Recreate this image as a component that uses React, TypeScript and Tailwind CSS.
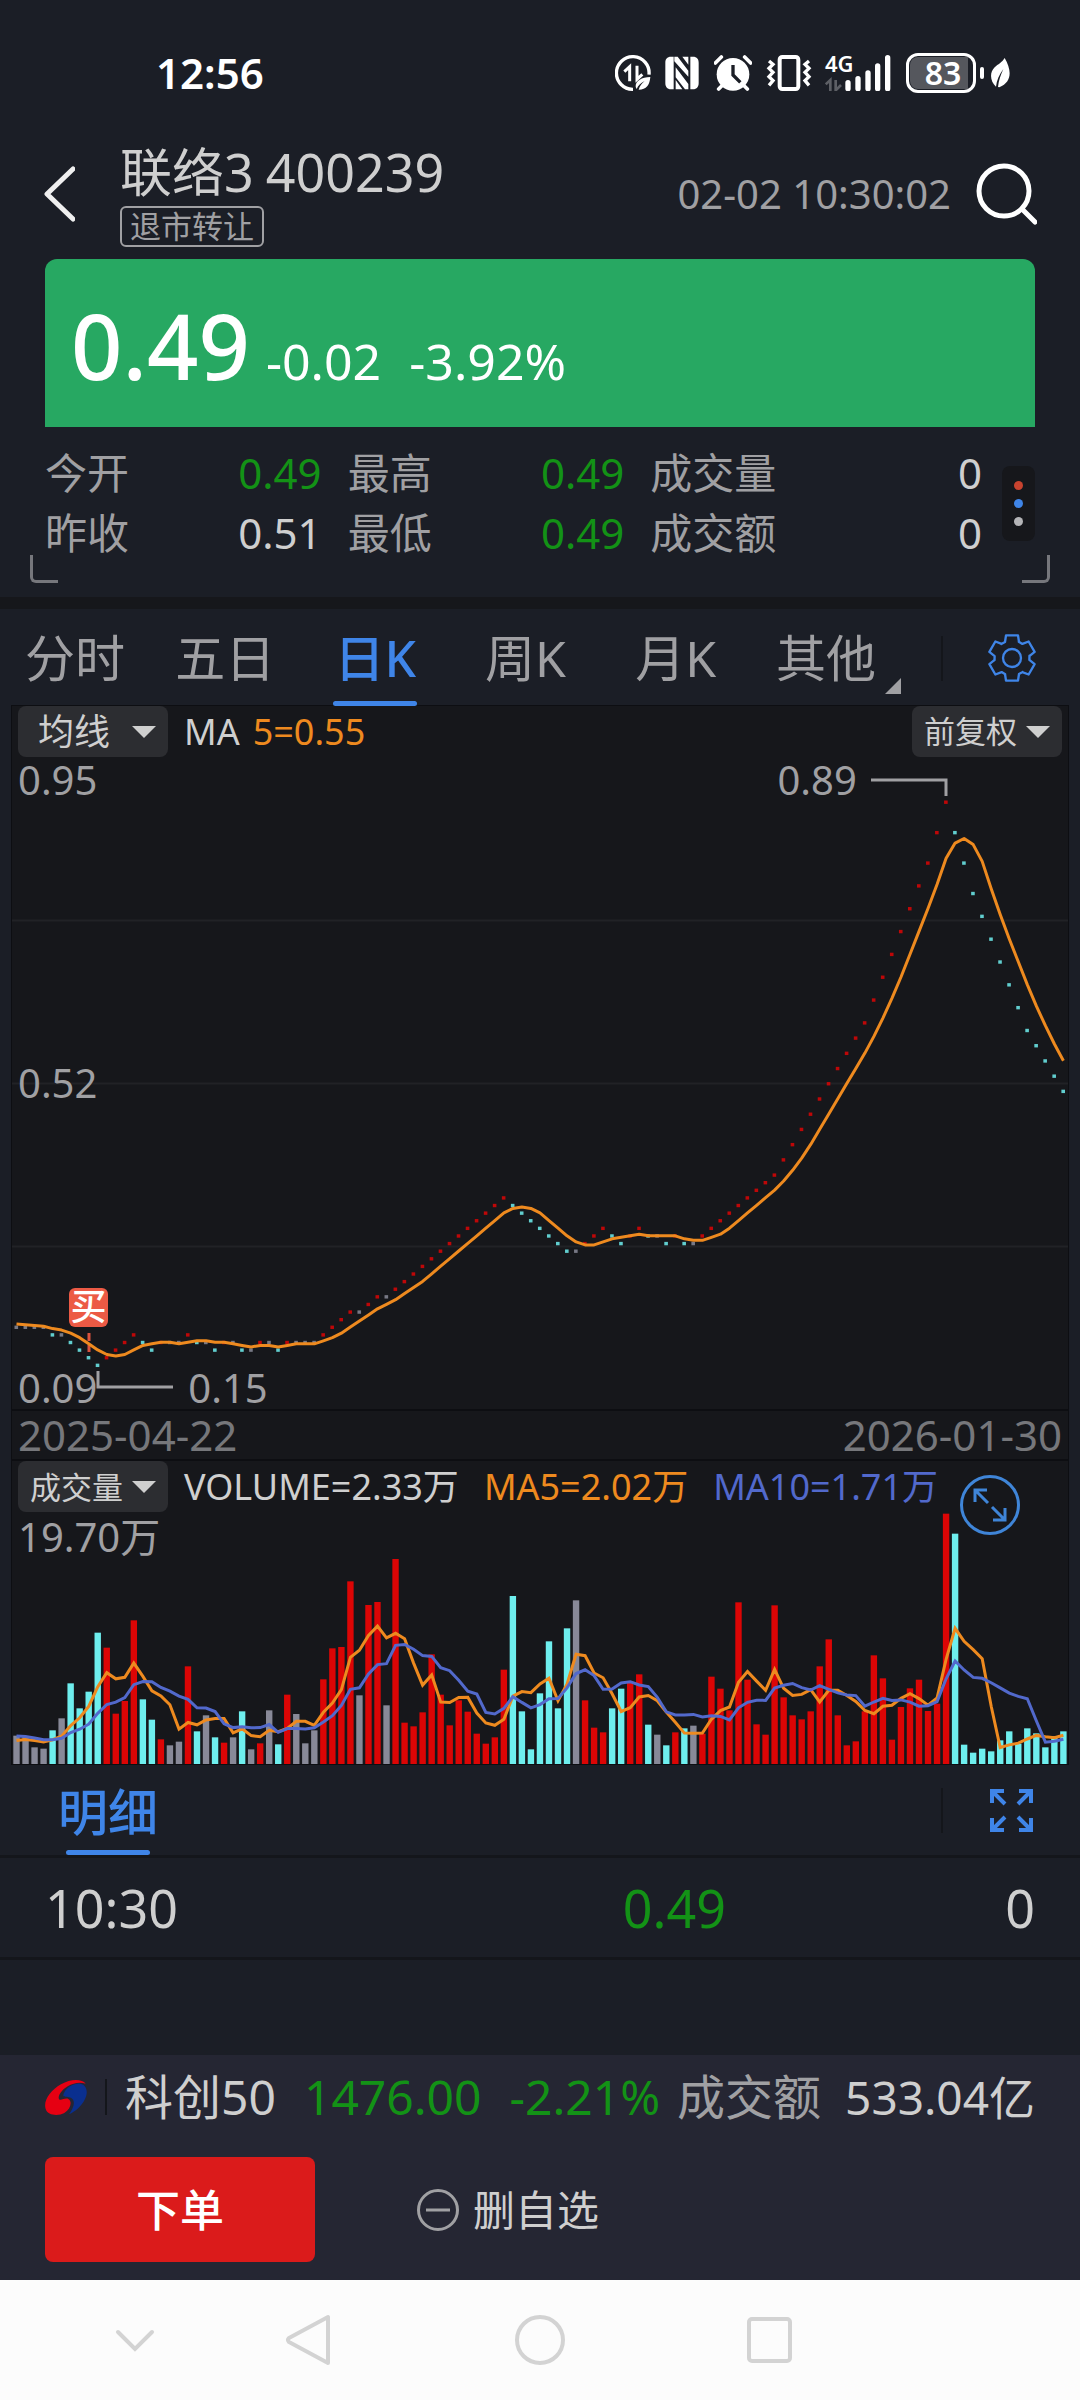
import clsx from "clsx";

const UP = "#dc0505";
const DOWN = "#6eeeee";
const FLAT = "#888998";
const STEP = 9.025;

// closing prices in cents, one per trading day
const closes = [
	20, 20, 20, 20, 19, 19, 18, 17, 16, 15, 16, 17, 18, 19, 18, 17, 18, 18, 18, 19, 18, 18, 17, 18, 18, 17, 17, 18, 18, 17,
	18, 18, 18, 18, 19, 20, 21, 22, 22, 23, 24, 24, 25, 26, 27, 28, 29, 30, 31, 32, 33, 34, 35, 36, 37, 36, 35, 34, 33, 32,
	31, 30, 30, 31, 32, 33, 32, 31, 32, 33, 32, 32, 31, 32, 31, 31, 32, 33, 34, 35, 36, 37, 38, 39, 40, 42, 44, 46, 48, 50,
	52, 54, 56, 58, 60, 63, 66, 69, 72, 75, 78, 81, 85, 89, 85, 81, 77, 74, 71, 68, 65, 62, 59, 57, 55, 53, 51,
];

const volumes = [
	85, 83, 50, 46, 101, 137, 242, 167, 217, 394, 349, 151, 189, 431, 194, 133, 74, 56, 67, 293, 98, 146, 80, 64, 80, 158,
	44, 62, 161, 59, 208, 150, 62, 101, 254, 347, 351, 548, 206, 477, 486, 176, 615, 124, 113, 155, 329, 208, 116, 191,
	157, 91, 61, 80, 283, 504, 158, 44, 212, 368, 167, 407, 491, 191, 109, 95, 167, 226, 248, 269, 118, 88, 56, 95, 107,
	115, 91, 262, 226, 161, 485, 253, 119, 88, 476, 200, 146, 134, 158, 293, 374, 146, 56, 68, 158, 326, 257, 73, 171,
	227, 253, 159, 181, 751, 691, 58, 34, 46, 38, 71, 98, 61, 107, 92, 50, 83, 98,
];

const average = (values: number[], before: number[], days: number) => {
	const all = [...before, ...values];
	return values.map((_, i) => {
		const end = i + before.length + 1;
		return all.slice(end - days, end).reduce((a, b) => a + b, 0) / days;
	});
};

const xAt = (i: number) => 4.5 + STEP * i;
const priceY = (cents: number) => 45 + (89 - cents) * 7.61;
const volumeY = (v: number) => 252 - v / 3;
const toPoints = (values: number[], y: (v: number) => number) =>
	values.map((v, i) => `${xAt(i).toFixed(1)},${y(v).toFixed(1)}`).join(" ");
const colorAt = (i: number) => {
	if (i === 0 || closes[i] === closes[i - 1]) return FLAT;
	return closes[i] > closes[i - 1] ? UP : DOWN;
};

const priceMa5 = average(closes, [20.5, 20.5, 20.5, 20.5], 5);
const volumeMa5 = average(volumes, [67, 67, 67, 67], 5);
const volumeMa10 = average(volumes, [97, 97, 97, 97, 97, 67, 67, 67, 67], 10);

const periods = ["分时", "五日", "日K", "周K", "月K", "其他"];

const quotes = [
	[
		{ label: "今开", value: "0.49", down: true },
		{ label: "最高", value: "0.49", down: true },
		{ label: "成交量", value: "0", down: false },
	],
	[
		{ label: "昨收", value: "0.51", down: false },
		{ label: "最低", value: "0.49", down: true },
		{ label: "成交额", value: "0", down: false },
	],
];

const gearPoints = () => {
	const points: string[] = [];
	for (let k = 0; k < 6; k++) {
		const a = (k * Math.PI) / 3;
		[
			[-32, -42],
			[-21, -48],
			[-18, -68],
			[18, -68],
			[21, -48],
		].forEach(([x, y]) => {
			points.push(
				`${(x * Math.cos(a) - y * Math.sin(a)).toFixed(1)},${(x * Math.sin(a) + y * Math.cos(a)).toFixed(1)}`
			);
		});
	}
	return points.join(" ");
};

const StatusBar = () => (
	<div className="h-[143px] pt-[2px] pl-[156px] pr-[70px] flex items-center justify-between text-white">
		<span className="text-[42px] leading-[50px] font-semibold">12:56</span>
		<div className="flex items-center">
			<svg className="w-9 h-9" viewBox="0 0 108 108" fill="none" stroke="#fff">
				<path d="M54 103a49 49 0 1 1 48-44" strokeWidth="10" />
				<path d="M28 50l16-15v44M82 58L66 73V32" strokeWidth="9" />
				<path d="M106 66c-26 0-44 12-44 27 0 4 1 6 3 9 5-12 13-18 24-24-8 7-15 14-18 26 24 0 33-14 35-38z" fill="#fff" stroke="none" />
			</svg>
			<svg className="ml-[14px] w-[34px] h-[34px]" viewBox="0 0 102 102">
				<path d="M18 2h8v98h-8C6 100 1 92 1 82V20C1 9 6 2 18 2zM84 2h-8v98h8c12 0 17-8 17-18V20C101 9 96 2 84 2z" fill="#fff" />
				<path d="M28 2h10l32 42v18L28 16zM32 34l38 50v16H60L32 64zM32 72l20 28H32zM52 2h18v24z" fill="#fff" />
			</svg>
			<svg className="ml-[15px] w-[38px] h-9" viewBox="0 0 114 108">
				<circle cx="57" cy="58" r="49" fill="#fff" />
				<path d="M4 24L22 6M110 24L92 6M14 102l12-12M100 102L88 90" stroke="#fff" strokeWidth="11" strokeLinecap="round" />
				<path d="M57 30v30l22 22" fill="none" stroke="#1b1e26" strokeWidth="10" />
			</svg>
			<svg className="ml-[14px] w-[46px] h-9" viewBox="0 0 136 108" fill="none" stroke="#fff">
				<rect x="40" y="6" width="56" height="96" rx="8" strokeWidth="12" />
				<path d="M8 18l12 10-12 12 12 12-12 13 12 12-12 14M128 18l-12 10 12 12-12 12 12 13-12 12 12 14" strokeWidth="10" />
			</svg>
			<div className="ml-[13px] relative w-[67px] h-9">
				<span className="absolute left-0 -top-1 text-[22px] leading-6 font-semibold">4G</span>
				<svg className="w-full h-full" viewBox="0 0 201 108">
					<path d="M2 88l14-13v33M48 90L32 106V75" stroke="#5d5f65" strokeWidth="8" fill="none" />
					<path d="M69 83v18M99 71v30M129 54v47M158 33v68M188 8v93" stroke="#fff" strokeWidth="16" strokeLinecap="round" />
				</svg>
			</div>
			<div className="ml-[14px] w-[70px] h-10 rounded-xl border-[3px] border-white p-px">
				<div className="w-[58px] h-full rounded-l-lg bg-[#55575d] pl-2 flex items-center justify-center text-[32px] leading-8 font-semibold">
					83
				</div>
			</div>
			<span className="ml-1 w-1 h-3 rounded-full bg-white" />
			<svg className="ml-[6px] w-5 h-[30px]" viewBox="0 0 60 90">
				<path d="M44 0c22 38 22 72-16 88l-4-1c2-20 8-36 16-54C28 50 20 66 18 86 0 70-2 44 14 28 24 18 36 14 44 0z" fill="#fff" />
			</svg>
		</div>
	</div>
);

const Header = () => (
	<header className="h-[116px] pb-[14px] px-[43px] flex items-center">
		<button type="button" aria-label="返回" className="w-8 shrink-0">
			<svg className="w-8 h-14" viewBox="0 0 32 56" fill="none" stroke="#efefef" strokeWidth="5">
				<path d="M30 3L4 28l26 25" strokeLinecap="round" strokeLinejoin="round" />
			</svg>
		</button>
		<div className="ml-[45px] flex flex-col items-start">
			<h1 className="text-[52px] leading-[60px] text-[#cfcfcf] flex gap-3">
				<span>联络3</span>
				<span>400239</span>
			</h1>
			<span className="mt-1 h-[41px] px-2 border-2 border-[#a0a0a3] rounded-md text-[31px] leading-9 text-[#a0a0a3]">
				退市转让
			</span>
		</div>
		<time className="ml-auto text-[40px] leading-[48px] text-[#a0a0a3]">02-02 10:30:02</time>
		<button type="button" aria-label="搜索" className="ml-6">
			<svg className="w-[62px] h-[62px]" viewBox="0 0 62 62" fill="none" stroke="#fff" strokeWidth="5">
				<circle cx="29" cy="28" r="25" />
				<path d="M47 46l13 13" strokeLinecap="round" />
			</svg>
		</button>
	</header>
);

const Quote = () => (
	<section className="relative px-[45px] pb-[34px]">
		<div className="h-[168px] rounded-t-xl bg-[#27a862] px-[26px] pt-[26px] flex items-baseline text-white">
			<strong className="text-[90px] leading-[120px] font-medium">0.49</strong>
			<span className="ml-4 text-[50px] leading-[60px]">-0.02</span>
			<span className="ml-7 text-[50px] leading-[60px]">-3.92%</span>
		</div>
		<div className="pt-4 flex items-center gap-5">
			<table className="flex-1 table-fixed w-full text-[42px] leading-[60px]">
				<tbody>
					{quotes.map((row, index) => (
						<tr key={index}>
							{row.map((item, i) => (
								<td key={item.label} className={clsx("p-0", i < 2 ? "w-[32.3%] pr-[26px]" : "w-[35.4%]")}>
									<div className="flex justify-between">
										<span className="text-[#a0a0a3]">{item.label}</span>
										<span className={item.down ? "text-[#139216]" : "text-[#cfcfcf]"}>{item.value}</span>
									</div>
								</td>
							))}
						</tr>
					))}
				</tbody>
			</table>
			<div className="w-[33px] h-[75px] shrink-0 rounded-lg bg-[#16171b] flex flex-col items-center justify-center gap-[9px] *:size-[9px] *:rounded-full">
				<span className="bg-[#c8432f]" />
				<span className="bg-[#3f85e8]" />
				<span className="bg-[#b4b4b7]" />
			</div>
		</div>
		<span className="absolute left-[30px] bottom-[14px] size-7 rounded-bl-md border-l-3 border-b-3 border-[#76777c]" />
		<span className="absolute right-[30px] bottom-[14px] size-7 rounded-br-md border-r-3 border-b-3 border-[#76777c]" />
	</section>
);

const PeriodTabs = () => (
	<nav className="mt-px h-24 flex items-center">
		<div className="flex-1 h-full pr-10 grid grid-cols-6">
			{periods.map((name) => (
				<button
					key={name}
					type="button"
					className={clsx(
						"relative h-full text-[50px] leading-[60px]",
						name === "日K" ? "text-[#3f85e8] font-medium" : "text-[#a0a0a3]"
					)}
				>
					{name}
					{name === "日K" && (
						<span className="absolute bottom-0 left-1/2 -translate-x-1/2 w-[84px] h-[5px] rounded-full bg-[#3f85e8]" />
					)}
					{name === "其他" && (
						<svg className="absolute bottom-3 right-0 size-4" viewBox="0 0 16 16" fill="#a0a0a3">
							<path d="M16 0v16H0z" />
						</svg>
					)}
				</button>
			))}
		</div>
		<div className="w-[139px] h-[45px] border-l-2 border-[#14161b] flex items-center justify-center">
			<button type="button" aria-label="设置">
				<svg className="size-12" viewBox="-72 -72 144 144" fill="none" stroke="#3f85e8" strokeWidth="7">
					<polygon points={gearPoints()} strokeLinejoin="round" />
					<circle r="27" />
				</svg>
			</button>
		</div>
	</nav>
);

const Picker = ({ name, className }: { name: string; className: string }) => (
	<button
		type="button"
		className={clsx(
			"w-[150px] h-[51px] shrink-0 rounded-lg bg-[#2c2d31] text-[#cfcfcf] flex items-center justify-between",
			className
		)}
	>
		{name}
		<svg className="w-6 h-3" viewBox="0 0 24 12" fill="#cfcfcf">
			<path d="M0 0h24L12 12z" />
		</svg>
	</button>
);

const PriceChart = () => (
	<div className="relative text-[40px] leading-[42px] text-[#a0a0a3]">
		<svg className="block w-full" viewBox="0 0 1056 652">
			<path d="M0 163.500h1056M0 326.500h1056M0 489.500h1056" stroke="#212226" strokeWidth="2" />
			{closes.map((c, i) => (
				<rect key={i} x={xAt(i) - 2} y={priceY(c) - 1.5} width="3.6" height="3.4" fill={colorAt(i)} opacity="0.85" />
			))}
			<path d="M77 576v8M77 588v7" stroke="#d9533f" strokeWidth="3" />
			<polyline
				points={toPoints(priceMa5, priceY)}
				fill="none"
				stroke="#ee8a1f"
				strokeWidth="3"
				strokeLinejoin="round"
			/>
			<path d="M859 23h75v16M86 614v16h75" fill="none" stroke="#a0a0a3" strokeWidth="3" />
		</svg>
		<span className="absolute left-[6px] top-[2px]">0.95</span>
		<span className="absolute left-[6px] top-1/2 -translate-y-1/2">0.52</span>
		<span className="absolute left-[6px] bottom-0">0.09</span>
		<span className="absolute left-[16.7%] bottom-0">0.15</span>
		<span className="absolute right-[20%] top-[2px]">0.89</span>
		<span className="absolute left-[5.4%] top-[81.4%] size-[39px] rounded-md bg-[#ec5a45] text-white text-[36px] leading-[38px] font-medium flex justify-center">
			买
		</span>
	</div>
);

const VolumeChart = () => (
	<div className="relative">
		<svg className="block w-full" viewBox="0 0 1056 252">
			{volumes.map((v, i) => (
				<rect key={i} x={xAt(i) - 3.2} y={volumeY(v)} width="6.4" height={v / 3} fill={colorAt(i)} />
			))}
			<g fill="none" strokeWidth="3">
				<polyline points={toPoints(volumeMa5, volumeY)} stroke="#ee8a1f" />
				<polyline points={toPoints(volumeMa10, volumeY)} stroke="#5269cc" />
			</g>
		</svg>
		<span className="absolute left-[6px] top-0 text-[40px] leading-[50px] text-[#a0a0a3]">19.70万</span>
		<button type="button" aria-label="展开" className="absolute right-[47px] -top-[38px]">
			<svg className="size-[62px]" viewBox="0 0 62 62" fill="none" stroke="#3f85d8" strokeWidth="3">
				<circle cx="31" cy="31" r="28.500" />
				<path d="M29 29L16 16M16 28V16h12M33 33l13 13M46 34v12H34" />
			</svg>
		</button>
	</div>
);

const Details = () => (
	<section>
		<div className="h-[94px] pl-[45px] flex items-end justify-between border-b-3 border-[#14161b]">
			<button type="button" className="px-[13px] h-full flex flex-col items-center justify-end text-[50px] leading-[76px] font-medium text-[#3f85e8]">
				明细
				<span className="w-[84px] h-[5px] rounded-full bg-[#3f85e8]" />
			</button>
			<div className="mb-[22px] w-[139px] h-[45px] border-l-2 border-[#14161b] flex items-center justify-center">
				<button type="button" aria-label="全屏">
					<svg className="w-[43px] h-[43px]" viewBox="0 0 43 43" fill="none" stroke="#3f85e8" strokeWidth="4">
						<path d="M2 14V2h12M2 2l13 13M29 2h12v12M41 2L28 15M2 29v12h12M2 41l13-13M41 29v12H29M41 41L28 28" />
					</svg>
				</button>
			</div>
		</div>
		<table className="w-full table-fixed text-[52px] leading-[99px]">
			<tbody>
				<tr className="border-b-3 border-[#14161b] text-[#cfcfcf]">
					<td className="pl-[45px] py-0">10:30</td>
					<td className="pr-0 py-0 text-right text-[#139216]">0.49</td>
					<td className="w-[354px] pr-[45px] py-0 text-right">0</td>
				</tr>
			</tbody>
		</table>
	</section>
);

const Logo = () => (
	<svg className="w-[42px] h-9" viewBox="0 0 126 108">
		<path d="M122 14C112 0 78-2 48 16 16 34-6 66 2 90c6 20 38 22 56 12 20-12 24-36 12-42-8-4-20 4-26 2-8-4 0-26 24-40C84 12 106 8 122 14z" fill="#e60012" />
		<path d="M58 40c8-16 30-28 48-26 20 4 24 26 14 46-10 22-30 38-48 46 12-16 20-36 10-46-8-8-20-4-26-8-2-2-1-8 2-12z" fill="#0a2f8f" />
	</svg>
);

const BottomBar = () => (
	<footer className="bg-[#252633]">
		<div className="h-[83px] px-[45px] flex items-center text-[48px] leading-[60px] text-[#cfcfcf] whitespace-nowrap">
			<Logo />
			<span className="ml-[18px] mr-[18px] w-[2px] h-9 bg-[#14161b]" />
			<span>科创50</span>
			<span className="ml-7 text-[#139216]">1476.00</span>
			<span className="ml-7 text-[#139216]">-2.21%</span>
			<span className="ml-auto text-[#a0a0a3]">成交额</span>
			<span className="ml-6 text-[46px]">533.04亿</span>
		</div>
		<div className="h-[142px] px-[45px] pt-[19px] flex items-start">
			<button type="button" className="w-[270px] h-[105px] rounded-lg bg-[#db1b1b] text-white text-[44px] font-medium">
				下单
			</button>
			<button type="button" className="ml-[102px] h-[105px] flex items-center gap-[14px] text-[42px] text-[#cfcfcf]">
				<svg className="size-[42px]" viewBox="0 0 42 42" fill="none" stroke="#a0a0a3" strokeWidth="3">
					<circle cx="21" cy="21" r="19.500" />
					<path d="M9 21h24" />
				</svg>
				删自选
			</button>
		</div>
	</footer>
);

const NavBar = () => (
	<div className="h-[120px] bg-[#fcfcfc] pl-[103px] flex items-center *:size-16">
		<button type="button" aria-label="收起">
			<svg viewBox="0 0 64 64" fill="none" stroke="#d3d3d3" strokeWidth="4" strokeLinecap="round">
				<path d="M15 24l17 17 17-17" />
			</svg>
		</button>
		<button type="button" aria-label="后退" className="ml-[108px]">
			<svg viewBox="0 0 64 64" fill="none" stroke="#d3d3d3" strokeWidth="4" strokeLinejoin="round">
				<path d="M53 9v46L14 34q-2-2 0-4z" />
			</svg>
		</button>
		<button type="button" aria-label="主页" className="ml-[169px]">
			<svg viewBox="0 0 64 64" fill="none" stroke="#d3d3d3" strokeWidth="4">
				<circle cx="32" cy="32" r="23" />
			</svg>
		</button>
		<button type="button" aria-label="最近任务" className="ml-[165px]">
			<svg viewBox="0 0 64 64" fill="none" stroke="#d3d3d3" strokeWidth="4">
				<rect x="12" y="11" width="41" height="42" rx="3" />
			</svg>
		</button>
	</div>
);

const App = () => {
	return (
		<div className="min-h-screen flex flex-col bg-[#1b1e26] font-['Noto_Sans','Noto_Sans_CJK_SC',sans-serif]">
			<StatusBar />
			<Header />
			<Quote />
			<div className="h-3 bg-[#16171b]" />
			<PeriodTabs />
			<section className="mx-3 bg-[#16171b] outline-1 outline-[#0d0e12]">
				<div className="h-[51px] px-[6px] flex items-center text-[36px]">
					<Picker name="均线" className="pl-5 pr-3" />
					<span className="ml-4 text-[#cfcfcf]">MA</span>
					<span className="ml-[13px] text-[#ee8a1f]">5=0.55</span>
					<Picker name="前复权" className="ml-auto pl-3 pr-3 text-[31px]" />
				</div>
				<PriceChart />
				<div className="h-[52px] px-[6px] border-y-2 border-[#0d0e12] flex items-center justify-between text-[42px] leading-[48px] text-[#76777b]">
					<span>2025-04-22</span>
					<span>2026-01-30</span>
				</div>
				<div className="h-[51px] px-[6px] flex items-center text-[36px] leading-[48px] whitespace-nowrap">
					<Picker name="成交量" className="pl-3 pr-3 text-[31px]" />
					<span className="ml-4 text-[#cfcfcf]">VOLUME=2.33万</span>
					<span className="ml-[25px] text-[#ee8a1f]">MA5=2.02万</span>
					<span className="ml-[25px] text-[#5269cc]">MA10=1.71万</span>
				</div>
				<VolumeChart />
			</section>
			<Details />
			<div className="flex-1" />
			<BottomBar />
			<NavBar />
		</div>
	);
};

export default App;
